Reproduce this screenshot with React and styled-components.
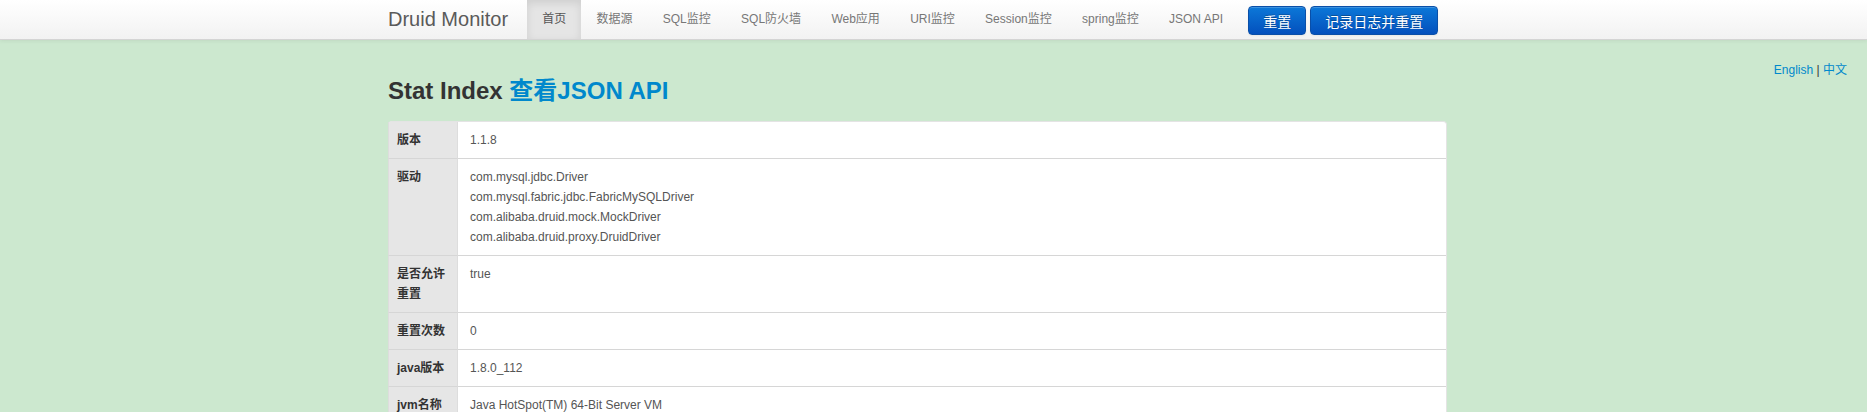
import React from "react";
import styled, { createGlobalStyle } from "styled-components";

const Global = createGlobalStyle`
  html, body { margin: 0; padding: 0; background: #cce8cf; }
  body {
    font-family: "Liberation Sans", Arial, "Noto Sans CJK SC", sans-serif;
    font-size: 12px;
    line-height: 20px;
    color: #333;
  }
`;

const Navbar = styled.div`
  height: 39px;
  background: linear-gradient(to bottom, #ffffff, #f2f2f2);
  border-bottom: 1px solid #d4d4d4;
  box-shadow: 0 1px 4px rgba(0, 0, 0, 0.065);
`;

const NavInner = styled.div`
  width: 1091px;
  margin: 0 auto;
  display: flex;
  align-items: stretch;
  height: 39px;
`;

const Brand = styled.a`
  font-size: 20px;
  line-height: 39px;
  color: #5a5a5a;
  padding-right: 19px;
  text-decoration: none;
`;

const NavList = styled.ul`
  display: flex;
  list-style: none;
  margin: 0;
  padding: 0;
`;

const NavItem = styled.li`
  padding: 0 15.15px;
  line-height: 39px;
  font-size: 12px;
  color: ${(p) => (p.$active ? "#555" : "#777")};
  background: ${(p) => (p.$active ? "#e5e5e5" : "transparent")};
  box-shadow: ${(p) => (p.$active ? "inset 0 3px 8px rgba(0,0,0,0.1)" : "none")};
  white-space: nowrap;
`;

const Btn = styled.button`
  align-self: flex-start;
  margin-top: 6px;
  margin-left: ${(p) => p.$gap || "0"};
  height: 29px;
  padding: 0 14px;
  font-family: "Liberation Sans", Arial, "Noto Sans CJK SC", sans-serif;
  font-size: 14px;
  color: #fff;
  background: linear-gradient(to bottom, #0c78d8, #0350bd);
  border: 1px solid #0a4fa8;
  border-radius: 4px;
  text-shadow: 0 -1px 0 rgba(0, 0, 0, 0.25);
  box-shadow: inset 0 1px 0 rgba(255, 255, 255, 0.2), 0 1px 2px rgba(0, 0, 0, 0.05);
  white-space: nowrap;
`;

const Header = styled.div`
  display: grid;
  grid-template-columns: 1fr 1091px 1fr;
  padding-top: 21px;
`;

const Lang = styled.div`
  grid-column: 3;
  justify-self: end;
  align-self: start;
  padding-right: 20px;
  font-size: 12px;
  line-height: 18px;
  color: #333;
`;

const LangLink = styled.a`
  color: #0088cc;
  text-decoration: none;
`;

const Container = styled.div`
  grid-column: 2;
  grid-row: 1;
`;

const Title = styled.h3`
  margin: 10px 0 0;
  font-size: 24px;
  line-height: 40px;
  font-weight: bold;
  color: #333;
`;

const TitleLink = styled.a`
  color: #0088cc;
  text-decoration: none;
`;

const Body = styled.div`
  width: 1091px;
  margin: 10px auto 0;
`;

const Table = styled.table`
  width: 1059px;
  table-layout: fixed;
  border-collapse: separate;
  border-spacing: 0;
  border: 1px solid #e4e4e4;
  border-left: 0;
  border-radius: 4px;
  background: #fff;
`;

const Th = styled.th`
  width: 52px;
  padding: 8px;
  text-align: left;
  vertical-align: top;
  font-weight: bold;
  color: #333;
  background: #e6e6e6;
  border-left: 1px solid #dddddd;
  border-top: ${(p) => (p.$first ? "0" : "1px solid #d6d6d6")};
`;

const Td = styled.td`
  padding: 8px 12px;
  text-align: left;
  vertical-align: top;
  color: #555;
  border-left: 1px solid #dddddd;
  border-top: ${(p) => (p.$first ? "0" : "1px solid #d6d6d6")};
`;

const Line = styled.div`
  line-height: 20px;
`;

const rows = [
  ["版本", ["1.1.8"]],
  [
    "驱动",
    [
      "com.mysql.jdbc.Driver",
      "com.mysql.fabric.jdbc.FabricMySQLDriver",
      "com.alibaba.druid.mock.MockDriver",
      "com.alibaba.druid.proxy.DruidDriver",
    ],
  ],
  ["是否允许重置", ["true"]],
  ["重置次数", ["0"]],
  ["java版本", ["1.8.0_112"]],
  ["jvm名称", ["Java HotSpot(TM) 64-Bit Server VM"]],
];

const navItems = [
  "首页",
  "数据源",
  "SQL监控",
  "SQL防火墙",
  "Web应用",
  "URI监控",
  "Session监控",
  "spring监控",
  "JSON API",
];

export default function App() {
  return (
    <>
      <Global />
      <Navbar>
        <NavInner>
          <Brand>Druid Monitor</Brand>
          <NavList>
            {navItems.map((n, i) => (
              <NavItem key={n} $active={i === 0}>
                {n}
              </NavItem>
            ))}
          </NavList>
          <Btn $gap="10px">重置</Btn>
          <Btn $gap="4px">记录日志并重置</Btn>
        </NavInner>
      </Navbar>
      <Header>
        <Container>
          <Title>
            Stat Index <TitleLink>查看JSON API</TitleLink>
          </Title>
        </Container>
        <Lang>
          <LangLink>English</LangLink> | <LangLink>中文</LangLink>
        </Lang>
      </Header>
      <Body>
        <Table>
          <tbody>
            {rows.map(([k, vals], i) => (
              <tr key={k}>
                <Th $first={i === 0}>{k}</Th>
                <Td $first={i === 0}>
                  {vals.map((v) => (
                    <Line key={v}>{v}</Line>
                  ))}
                </Td>
              </tr>
            ))}
          </tbody>
        </Table>
      </Body>
    </>
  );
}
